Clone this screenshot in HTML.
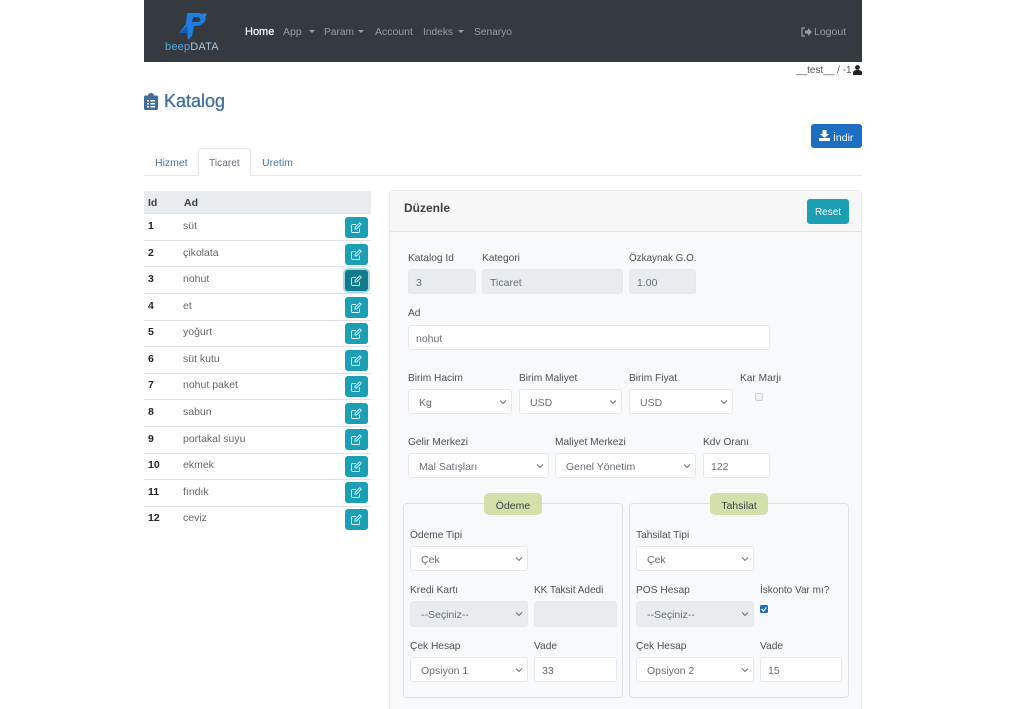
<!DOCTYPE html>
<html><head><meta charset="utf-8"><style>
html,body{margin:0;padding:0;background:#fff;width:1024px;height:709px;overflow:hidden}
body{font-family:"Liberation Sans","DejaVu Sans",sans-serif;font-size:10.5px;color:#212529;position:relative}
.a,.t,.i,.s,.b,.l{position:absolute;box-sizing:border-box}
.t,.l{white-space:nowrap;line-height:14px;margin-top:1px}
.l{color:#4a4f54;font-size:10.2px;margin-top:2px}
.i,.s{height:25px;background:#fff;border:1px solid #e6e8ec;border-radius:3px;color:#666c73;line-height:27px;padding-left:7px;white-space:nowrap}
.s{padding-left:10px}
.d{background:#e9ecef}
.s svg{position:absolute;right:4px;top:9px}
.n{color:#9a9da0;top:24px}
.b{background:#1a9fb5;border-radius:3px;width:23px;height:21px;left:345px}
.b svg{position:absolute;left:6px;top:5px;opacity:.85}
.r{position:absolute;left:144px;width:227px;height:1px;background:#dee2e6}
.leg{background:#d3e0ac;border-radius:5px;height:22px;line-height:26px;text-align:center;width:58px;top:493px;color:#3c4146}
.fs{border:1px solid #dee2e6;border-radius:4px;top:503px;width:220px;height:195px}
</style></head><body>
<div class="a" style="left:144px;top:0;width:718px;height:62px;background:#343a40"></div>
<svg class="a" style="left:174px;top:10px" width="36" height="32" viewBox="0 0 36 32"><path d="M13 3L25 3C31 4 33 8 31 11C29 15 24 16 20 16L18 26L14 30L13 22L5 23L12 14Z" fill="#1f7fe0"/><path d="M19 7h5c3 1 3 4 1 5h-7z" fill="#343a40"/><path d="M5 23l8-7 1 7z" fill="#135fb0"/><path d="M29 3l4 1-2 3z" fill="#3f86c8"/></svg>
<div class="t" style="left:165px;top:39px;font-size:11px;letter-spacing:.2px;color:#58a6dc">beep<span style="color:#a8c4d8">DATA</span></div>
<div class="t" style="left:245px;top:24px;color:#fff;font-size:11px;-webkit-text-stroke:.2px #fff">Home</div>
<div class="t n" style="left:283px">App</div>
<div class="a" style="left:309px;top:30px;border:3px solid transparent;border-top-color:#9a9da0"></div>
<div class="t n" style="left:324px;font-size:10.2px;margin-top:2px">Param</div>
<div class="a" style="left:358px;top:30px;border:3px solid transparent;border-top-color:#9a9da0"></div>
<div class="t n" style="left:375px">Account</div>
<div class="t n" style="left:423px;font-size:10.2px;margin-top:2px">Indeks</div>
<div class="a" style="left:458px;top:30px;border:3px solid transparent;border-top-color:#9a9da0"></div>
<div class="t n" style="left:474px;font-size:10.2px;margin-top:2px">Senaryo</div>
<svg class="a" style="left:801px;top:27px" width="11" height="10" viewBox="0 0 11 10"><path d="M4 1H1v8h3" fill="none" stroke="#9a9da0" stroke-width="1.2"/><path d="M4 3.500h3V1l4 4-4 4V6.500H4z" fill="#9a9da0"/></svg>
<div class="t n" style="left:814px">Logout</div>
<div class="t" style="left:796px;top:63px;color:#555;font-size:10px">__test__ / -1</div>
<svg class="a" style="left:853px;top:65px" width="9" height="10" viewBox="0 0 9 10"><circle cx="4.500" cy="2.500" r="2.400" fill="#222"/><path d="M0 10V8c0-2 1.500-3 4.500-3S9 6 9 8v2z" fill="#222"/></svg>
<svg class="a" style="left:144px;top:93px" width="14" height="17" viewBox="0 0 14 17"><path d="M1.500 2.500H4a3 2.500 0 0 1 6 0h2.500A1.500 1.500 0 0 1 14 4v11.500a1.500 1.500 0 0 1-1.500 1.500h-11A1.500 1.500 0 0 1 0 15.500V4a1.500 1.500 0 0 1 1.500-1.500z" fill="#3f6f9a"/><path d="M3 7h2v1.500H3zM6.500 7H11v1.500H6.500zM3 10h2v1.500H3zM6.500 10H11v1.500H6.500zM3 13h2v1.500H3zM6.500 13H11v1.500H6.500z" fill="#fff"/></svg>
<div class="t" style="left:164px;top:90px;font-size:18px;line-height:21px;color:#41729f;-webkit-text-stroke:.35px #41729f">Katalog</div>
<div class="a" style="left:811px;top:124px;width:51px;height:24px;background:#1b6ec2;border-radius:3px"></div>
<svg class="a" style="left:819px;top:130px" width="11" height="11" viewBox="0 0 11 11"><path d="M3.500 0h4v4H10L5.500 8 1 4h2.500z" fill="#fff"/><rect x="0" y="8" width="11" height="3" rx=".5" fill="#fff"/></svg>
<div class="t" style="left:833px;top:130px;color:#fff">İndir</div>
<div class="a" style="left:144px;top:175px;width:718px;height:1px;background:#e4e7ea"></div>
<div class="a" style="left:198px;top:148px;width:53px;height:28px;background:#fff;border:1px solid #e4e7ea;border-bottom:0;border-radius:3px 3px 0 0"></div>
<div class="t" style="left:155px;top:155px;color:#41729f">Hizmet</div>
<div class="t" style="left:209px;top:155px;color:#666c73;font-size:10.2px;margin-top:2px">Ticaret</div>
<div class="t" style="left:262px;top:155px;color:#41729f">Uretim</div>
<div class="a" style="left:144px;top:191px;width:227px;height:22px;background:#e9ecef"></div>
<div class="t" style="left:148px;top:195px;font-weight:bold;color:#3c4146">Id</div>
<div class="t" style="left:184px;top:195px;font-weight:bold;color:#3c4146">Ad</div>
<div class="r" style="top:213px"></div><div class="r" style="top:240px"></div><div class="r" style="top:266px"></div><div class="r" style="top:293px"></div><div class="r" style="top:320px"></div><div class="r" style="top:346px"></div><div class="r" style="top:373px"></div><div class="r" style="top:399px"></div><div class="r" style="top:426px"></div><div class="r" style="top:453px"></div><div class="r" style="top:479px"></div><div class="r" style="top:506px"></div>
<div class="t" style="left:148px;top:218px;font-weight:bold">1</div><div class="t" style="left:183px;top:218px;color:#666">süt</div>
<div class="t" style="left:148px;top:245px;font-weight:bold">2</div><div class="t" style="left:183px;top:245px;color:#666">çikolata</div>
<div class="t" style="left:148px;top:271px;font-weight:bold">3</div><div class="t" style="left:183px;top:271px;color:#666">nohut</div>
<div class="t" style="left:148px;top:298px;font-weight:bold">4</div><div class="t" style="left:183px;top:298px;color:#666">et</div>
<div class="t" style="left:148px;top:324px;font-weight:bold">5</div><div class="t" style="left:183px;top:324px;color:#666">yoğurt</div>
<div class="t" style="left:148px;top:351px;font-weight:bold">6</div><div class="t" style="left:183px;top:351px;color:#666">süt kutu</div>
<div class="t" style="left:148px;top:377px;font-weight:bold">7</div><div class="t" style="left:183px;top:377px;color:#666">nohut paket</div>
<div class="t" style="left:148px;top:404px;font-weight:bold">8</div><div class="t" style="left:183px;top:404px;color:#666">sabun</div>
<div class="t" style="left:148px;top:431px;font-weight:bold">9</div><div class="t" style="left:183px;top:431px;color:#666">portakal suyu</div>
<div class="t" style="left:148px;top:457px;font-weight:bold">10</div><div class="t" style="left:183px;top:457px;color:#666">ekmek</div>
<div class="t" style="left:148px;top:484px;font-weight:bold">11</div><div class="t" style="left:183px;top:484px;color:#666">fındık</div>
<div class="t" style="left:148px;top:510px;font-weight:bold">12</div><div class="t" style="left:183px;top:510px;color:#666">ceviz</div>
<svg width="0" height="0" style="position:absolute"><symbol id="e" viewBox="0 0 11 11"><path d="M8.500 6.500V9.500a1 1 0 0 1-1 1H1.500a1 1 0 0 1-1-1V3.500a1 1 0 0 1 1-1H5" fill="none" stroke="#fff" stroke-width=".9"/><path d="M4 5.500L8.800.7l1.500 1.500L5.500 7H4z" fill="none" stroke="#fff" stroke-width=".9"/></symbol></svg>
<div class="b" style="top:217px"><svg width="11" height="11"><use href="#e"/></svg></div>
<div class="b" style="top:244px"><svg width="11" height="11"><use href="#e"/></svg></div>
<div class="b" style="top:270px;background:#117a8b;box-shadow:0 0 0 2px #a6d8e0"><svg width="11" height="11"><use href="#e"/></svg></div>
<div class="b" style="top:297px"><svg width="11" height="11"><use href="#e"/></svg></div>
<div class="b" style="top:323px"><svg width="11" height="11"><use href="#e"/></svg></div>
<div class="b" style="top:350px"><svg width="11" height="11"><use href="#e"/></svg></div>
<div class="b" style="top:376px"><svg width="11" height="11"><use href="#e"/></svg></div>
<div class="b" style="top:403px"><svg width="11" height="11"><use href="#e"/></svg></div>
<div class="b" style="top:429px"><svg width="11" height="11"><use href="#e"/></svg></div>
<div class="b" style="top:456px"><svg width="11" height="11"><use href="#e"/></svg></div>
<div class="b" style="top:482px"><svg width="11" height="11"><use href="#e"/></svg></div>
<div class="b" style="top:509px"><svg width="11" height="11"><use href="#e"/></svg></div>
<div class="a" style="left:389px;top:190px;width:473px;height:531px;background:#f8f9fa;border:1px solid #e8e9eb;border-radius:4px"></div>
<div class="a" style="left:390px;top:191px;width:471px;height:41px;background:#f7f7f7;border-bottom:1px solid #e2e3e5"></div>
<div class="t" style="left:404px;top:200px;font-size:12px;font-weight:bold;color:#3c4146">Düzenle</div>
<div class="a" style="left:807px;top:199px;width:42px;height:25px;background:#1a9fb5;border-radius:3px;color:#fff;text-align:center;line-height:27px;font-size:10px">Reset</div>
<div class="l" style="left:408px;top:250px">Katalog Id</div><div class="l" style="left:482px;top:250px">Kategori</div><div class="l" style="left:629px;top:250px;font-size:9.9px">Özkaynak G.O.</div>
<div class="i d" style="left:408px;top:269px;width:68px">3</div><div class="i d" style="left:482px;top:269px;width:141px">Ticaret</div><div class="i d" style="left:629px;top:269px;width:67px">1.00</div>
<div class="l" style="left:408px;top:305px">Ad</div>
<div class="i" style="left:408px;top:325px;width:362px">nohut</div>
<svg width="0" height="0" style="position:absolute"><symbol id="c" viewBox="0 0 8 6"><path d="M1 1.500l3 3 3-3" fill="none" stroke="#666" stroke-width=".9"/></symbol></svg>
<div class="l" style="left:408px;top:370px">Birim Hacim</div><div class="l" style="left:519px;top:370px">Birim Maliyet</div><div class="l" style="left:629px;top:370px">Birim Fiyat</div><div class="l" style="left:740px;top:370px">Kar Marjı</div>
<div class="s" style="left:408px;top:389px;width:104px">Kg<svg width="8" height="6"><use href="#c"/></svg></div>
<div class="s" style="left:519px;top:389px;width:103px">USD<svg width="8" height="6"><use href="#c"/></svg></div>
<div class="s" style="left:629px;top:389px;width:104px">USD<svg width="8" height="6"><use href="#c"/></svg></div>
<div class="a" style="left:755px;top:393px;width:8px;height:8px;border:1px solid #ccd0d4;border-radius:2px;background:#f0f1f3"></div>
<div class="l" style="left:408px;top:434px">Gelir Merkezi</div><div class="l" style="left:555px;top:434px">Maliyet Merkezi</div><div class="l" style="left:703px;top:434px">Kdv Oranı</div>
<div class="s" style="left:408px;top:453px;width:141px">Mal Satışları<svg width="8" height="6"><use href="#c"/></svg></div>
<div class="s" style="left:555px;top:453px;width:141px">Genel Yönetim<svg width="8" height="6"><use href="#c"/></svg></div>
<div class="i" style="left:703px;top:453px;width:67px">122</div>
<div class="a fs" style="left:403px"></div><div class="a fs" style="left:629px"></div>
<div class="a leg" style="left:484px">Ödeme</div><div class="a leg" style="left:710px">Tahsilat</div>
<div class="l" style="left:410px;top:527px">Ödeme Tipi</div><div class="l" style="left:636px;top:527px">Tahsilat Tipi</div>
<div class="s" style="left:410px;top:546px;width:118px">Çek<svg width="8" height="6"><use href="#c"/></svg></div>
<div class="s" style="left:636px;top:546px;width:118px">Çek<svg width="8" height="6"><use href="#c"/></svg></div>
<div class="l" style="left:410px;top:582px">Kredi Kartı</div><div class="l" style="left:534px;top:582px;font-size:10px">KK Taksit Adedi</div><div class="l" style="left:636px;top:582px">POS Hesap</div><div class="l" style="left:760px;top:582px;font-size:10px">İskonto Var mı?</div>
<div class="s d" style="left:410px;top:601px;width:118px;height:26px">--Seçiniz--<svg width="8" height="6"><use href="#c"/></svg></div>
<div class="i d" style="left:534px;top:601px;width:83px;height:26px"></div>
<div class="s d" style="left:636px;top:601px;width:118px;height:26px">--Seçiniz--<svg width="8" height="6"><use href="#c"/></svg></div>
<svg class="a" style="left:760px;top:605px" width="8" height="8" viewBox="0 0 8 8"><rect width="8" height="8" rx="1.500" fill="#1b6ec2"/><path d="M1.500 4l2 2 3-3.500" fill="none" stroke="#fff" stroke-width="1.200"/></svg>
<div class="l" style="left:410px;top:638px">Çek Hesap</div><div class="l" style="left:534px;top:638px">Vade</div><div class="l" style="left:636px;top:638px">Çek Hesap</div><div class="l" style="left:760px;top:638px">Vade</div>
<div class="s" style="left:410px;top:657px;width:118px">Opsiyon 1<svg width="8" height="6"><use href="#c"/></svg></div>
<div class="i" style="left:534px;top:657px;width:83px">33</div>
<div class="s" style="left:636px;top:657px;width:118px">Opsiyon 2<svg width="8" height="6"><use href="#c"/></svg></div>
<div class="i" style="left:760px;top:657px;width:82px">15</div>
</body></html>
